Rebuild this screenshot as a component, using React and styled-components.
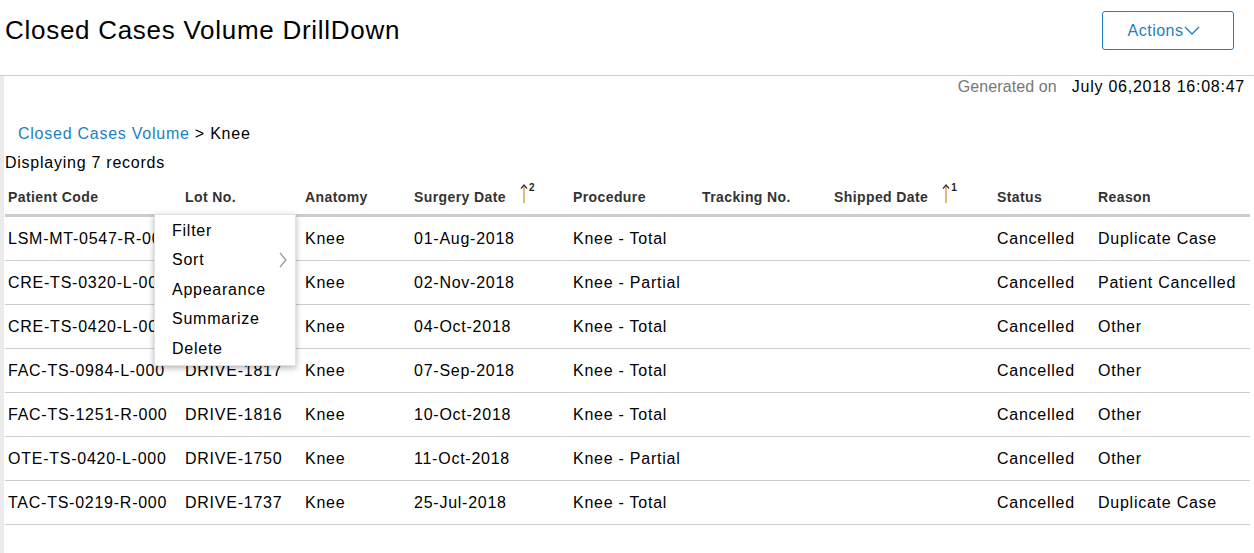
import React from 'react';
import styled, { createGlobalStyle } from 'styled-components';

const GlobalStyle = createGlobalStyle`
  body {
    margin: 0;
    font-family: "Liberation Sans", Arial, sans-serif;
    color: #000;
    background: #fff;
  }
`;

const columns = '177px 120px 109px 159px 129px 132px 163px 101px 155px';

const Page = styled.div`
  width: 1254px;
  height: 553px;
  overflow: hidden;
  letter-spacing: 0.75px;
`;

const Header = styled.header`
  display: flex;
  align-items: flex-start;
  justify-content: space-between;
  border-bottom: 1px solid #cfcfcf;
  box-sizing: border-box;
  height: 76px;
`;

const Title = styled.h1`
  margin: 15px 0 0 5px;
  font-size: 26px;
  font-weight: 400;
  line-height: 30px;
  letter-spacing: 0.72px;
`;

const ActionsButton = styled.button`
  margin: 11px 20px 0 0;
  width: 132px;
  height: 39px;
  border: 1px solid #1b7fc4;
  border-radius: 3px;
  background: #fff;
  color: #1b7fc4;
  font-family: inherit;
  font-size: 16px;
  letter-spacing: 0.5px;
  display: flex;
  align-items: center;
  justify-content: center;
  gap: 1px;
  padding: 0 8px 0 0;
`;

const Body = styled.div`
  display: flex;
  height: 477px;
`;

const Strip = styled.div`
  width: 4px;
  background: #ebebeb;
  flex-shrink: 0;
`;

const Content = styled.div`
  position: relative;
  flex: 1;
  padding: 0 4px 0 1px;
`;

const Generated = styled.div`
  display: flex;
  justify-content: flex-end;
  align-items: center;
  gap: 15px;
  height: 22px;
  padding-right: 5px;
  font-size: 16px;
`;

const GenLabel = styled.span`
  color: #777;
  letter-spacing: 0.1px;
`;

const Breadcrumb = styled.div`
  margin: 26px 0 0 13px;
  font-size: 16px;
  line-height: 20px;
`;

const Crumb = styled.span`
  color: #1b7fc4;
`;

const Count = styled.div`
  margin-top: 9px;
  font-size: 16px;
  line-height: 20px;
`;

const HeadRow = styled.div`
  display: grid;
  grid-template-columns: ${columns};
  height: 37px;
  margin-top: 4px;
  border-bottom: 3px solid #cccccc;
  align-items: center;
`;

const HeadCell = styled.div`
  padding-left: 3px;
  font-size: 14px;
  font-weight: 700;
  letter-spacing: 0.4px;
  color: #333;
  display: flex;
  align-items: center;
  margin-top: 3px;
`;

const SortMark = styled.span`
  display: inline-flex;
  align-items: flex-start;
  margin-left: 14px;
  margin-top: -8px;
`;

const Sup = styled.span`
  font-size: 10px;
  font-weight: 700;
  color: #222;
  margin-left: 1px;
  margin-top: -1px;
`;

const Row = styled.div`
  display: grid;
  grid-template-columns: ${columns};
  height: 44px;
  border-bottom: 1px solid #cccccc;
  box-sizing: border-box;
  align-items: center;
`;

const Cell = styled.div`
  padding-left: 3px;
  font-size: 16px;
  white-space: nowrap;
  overflow: hidden;
`;

const Menu = styled.ul`
  position: absolute;
  left: 150px;
  top: 138px;
  width: 142px;
  margin: 0;
  padding: 1px 0;
  list-style: none;
  background: #fff;
  border: 1px solid #e2e2e2;
  box-shadow: 0 2px 6px rgba(0, 0, 0, 0.3);
  box-sizing: border-box;
`;

const MenuItem = styled.li`
  height: 29.5px;
  display: flex;
  align-items: center;
  justify-content: space-between;
  padding: 0 8px 0 17px;
  font-size: 16px;
`;

const SortArrow = () => (
  <svg width="8" height="20" viewBox="0 0 8 20">
    <line x1="4" y1="3" x2="4" y2="20" stroke="#e0922f" strokeWidth="1.3" />
    <path d="M1 5.5 L4 2 L7 5.5" fill="none" stroke="#333" strokeWidth="1.2" />
  </svg>
);

const Chevron = () => (
  <svg width="16" height="10" viewBox="0 0 16 10">
    <path d="M1 1 L8 8 L15 1" fill="none" stroke="#1b7fc4" strokeWidth="1.3" />
  </svg>
);

const RightChevron = () => (
  <svg width="8" height="16" viewBox="0 0 8 16">
    <path d="M1 1 L7 8 L1 15" fill="none" stroke="#999" strokeWidth="1.3" />
  </svg>
);

const headers = [
  { label: 'Patient Code' },
  { label: 'Lot No.' },
  { label: 'Anatomy' },
  { label: 'Surgery Date', sort: 2 },
  { label: 'Procedure' },
  { label: 'Tracking No.' },
  { label: 'Shipped Date', sort: 1 },
  { label: 'Status' },
  { label: 'Reason' },
];

const rows = [
  ['LSM-MT-0547-R-000', 'DRIVE-1820', 'Knee', '01-Aug-2018', 'Knee - Total', '', '', 'Cancelled', 'Duplicate Case'],
  ['CRE-TS-0320-L-000', 'DRIVE-1819', 'Knee', '02-Nov-2018', 'Knee - Partial', '', '', 'Cancelled', 'Patient Cancelled'],
  ['CRE-TS-0420-L-000', 'DRIVE-1818', 'Knee', '04-Oct-2018', 'Knee - Total', '', '', 'Cancelled', 'Other'],
  ['FAC-TS-0984-L-000', 'DRIVE-1817', 'Knee', '07-Sep-2018', 'Knee - Total', '', '', 'Cancelled', 'Other'],
  ['FAC-TS-1251-R-000', 'DRIVE-1816', 'Knee', '10-Oct-2018', 'Knee - Total', '', '', 'Cancelled', 'Other'],
  ['OTE-TS-0420-L-000', 'DRIVE-1750', 'Knee', '11-Oct-2018', 'Knee - Partial', '', '', 'Cancelled', 'Other'],
  ['TAC-TS-0219-R-000', 'DRIVE-1737', 'Knee', '25-Jul-2018', 'Knee - Total', '', '', 'Cancelled', 'Duplicate Case'],
];

const menuItems = ['Filter', 'Sort', 'Appearance', 'Summarize', 'Delete'];

const App = () => (
  <Page>
    <GlobalStyle />
    <Header>
      <Title>Closed Cases Volume DrillDown</Title>
      <ActionsButton>
        Actions
        <Chevron />
      </ActionsButton>
    </Header>
    <Body>
      <Strip />
      <Content>
        <Generated>
          <GenLabel>Generated on</GenLabel>
          <span>July 06,2018 16:08:47</span>
        </Generated>
        <Breadcrumb>
          <Crumb>Closed Cases Volume</Crumb> &gt; Knee
        </Breadcrumb>
        <Count>Displaying 7 records</Count>
        <HeadRow>
          {headers.map(h => (
            <HeadCell key={h.label}>
              {h.label}
              {h.sort && (
                <SortMark>
                  <SortArrow />
                  <Sup>{h.sort}</Sup>
                </SortMark>
              )}
            </HeadCell>
          ))}
        </HeadRow>
        {rows.map(r => (
          <Row key={r[0]}>
            {r.map((c, i) => (
              <Cell key={i}>{c}</Cell>
            ))}
          </Row>
        ))}
        <Menu>
          {menuItems.map(m => (
            <MenuItem key={m}>
              {m}
              {m === 'Sort' && <RightChevron />}
            </MenuItem>
          ))}
        </Menu>
      </Content>
    </Body>
  </Page>
);

export default App;
